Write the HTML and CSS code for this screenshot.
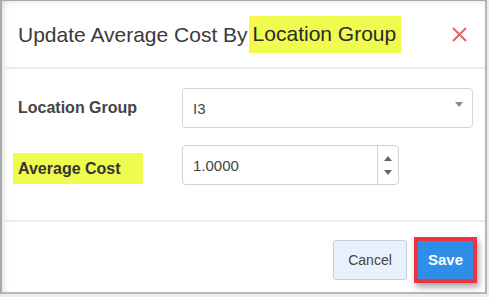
FILE: index.html
```html
<!DOCTYPE html>
<html lang="en">
<head>
    <meta charset="UTF-8">
    <title>Update Average Cost</title>
    <link rel="stylesheet" href="styles.css">
</head>
<body>
    <div class="modal">
        <div class="modal-header">
            <h2 class="modal-title">Update Average Cost By <span class="mark">Location Group</span></h2>
            <svg class="close" width="15" height="15" viewBox="0 0 15 15">
                <path d="M1 1 L14 14 M14 1 L1 14" stroke="#e06262" stroke-width="1.8" fill="none"/>
            </svg>
        </div>

        <div class="modal-body">
            <div class="form-row">
                <label class="label">Location Group</label>
                <div class="select">
                    <span>I3</span>
                    <span class="caret"></span>
                </div>
            </div>
            <div class="form-row">
                <label class="label"><span class="mark mark-label">Average Cost</span></label>
                <div class="number">
                    <span class="number-value">1.0000</span>
                    <div class="spinner">
                        <span class="up"></span>
                        <span class="down"></span>
                    </div>
                </div>
            </div>
        </div>

        <div class="modal-footer">
            <button class="btn btn-cancel">Cancel</button>
            <div class="save-wrap">
                <button class="btn btn-save">Save</button>
            </div>
        </div>
    </div>
</body>
</html>
```

FILE: styles.css
```css
* {
    margin: 0;
    padding: 0;
    box-sizing: border-box;
}

body {
    font-family: 'Liberation Sans', Arial, sans-serif;
    background: #ececec;
    width: 489px;
    height: 297px;
    overflow: hidden;
}

.modal {
    width: 487px;
    height: 294px;
    background: #fff;
    border: 1px solid #a9a9a9;
    border-left: 2px solid #a9a9a9;
    border-bottom: 2px solid #b5b5b5;
    border-right: 2px solid #b5b5b5;
    box-shadow: inset 6px 0 6px -4px rgba(0, 0, 0, 0.12), inset 0 6px 6px -4px rgba(0, 0, 0, 0.08);
    display: flex;
    flex-direction: column;
}

.modal-header {
    height: 68px;
    display: flex;
    align-items: center;
    justify-content: space-between;
    padding: 1px 18px 0 16px;
    border-bottom: 2px solid #ececec;
}

.modal-title {
    font-weight: normal;
    font-size: 21px;
    color: #3a3a3a;
    display: flex;
    align-items: center;
}

.mark {
    background: #f0fa4f;
    color: #2a2a2a;
}

.modal-title .mark {
    padding: 6px 5px 7px 4px;
    margin-left: 1px;
}

.close {
    display: block;
}

.modal-body {
    height: 153px;
    padding: 19px 12px 0 11px;
    border-bottom: 2px solid #ececec;
}

.form-row {
    display: flex;
    align-items: center;
    margin-bottom: 17px;
}

.label {
    width: 169px;
    font-size: 16px;
    font-weight: bold;
    color: #444;
    padding-left: 5px;
}

.mark-label {
    display: inline-block;
    margin-left: -5px;
    margin-top: 7px;
    padding: 7px 22px 6px 5px;
    color: #333;
}

.select {
    flex: 1;
    height: 40px;
    border: 1px solid #d6d6d6;
    border-radius: 4px;
    display: flex;
    align-items: center;
    justify-content: space-between;
    padding: 0 9px 0 10px;
    font-size: 15px;
    color: #444;
}

.caret {
    width: 0;
    height: 0;
    border-left: 4px solid transparent;
    border-right: 4px solid transparent;
    border-top: 5px solid #888;
    margin-bottom: 8px;
}

.number {
    width: 217px;
    height: 40px;
    border: 1px solid #d0d0d0;
    border-radius: 4px;
    display: flex;
    font-size: 15px;
    color: #444;
}

.number-value {
    flex: 1;
    display: flex;
    align-items: center;
    padding-left: 10px;
    border-right: 1px solid #d0d0d0;
}

.spinner {
    width: 20px;
    display: flex;
    flex-direction: column;
    align-items: center;
    justify-content: center;
    gap: 9px;
}

.up, .down {
    width: 0;
    height: 0;
    border-left: 4px solid transparent;
    border-right: 4px solid transparent;
}

.up {
    border-bottom: 5px solid #666;
}

.down {
    border-top: 5px solid #666;
}

.modal-footer {
    flex: 1;
    display: flex;
    align-items: center;
    justify-content: flex-end;
    padding: 5px 8px 0 0;
    gap: 7px;
}

.btn {
    font-family: 'Liberation Sans', Arial, sans-serif;
    font-size: 14px;
    border-radius: 3px;
    cursor: pointer;
}

.btn-cancel {
    width: 74px;
    height: 40px;
    background: #e9f2fc;
    border: 1px solid #c8ced6;
    color: #444;
}

.save-wrap {
    border: 4px solid #ee3340;
    box-shadow: 2px 4px 6px rgba(0, 0, 0, 0.35);
}

.btn-save {
    display: block;
    width: 55px;
    height: 38px;
    background: #2f8ee8;
    border: none;
    border-radius: 0;
    color: #fff;
    font-weight: bold;
    font-size: 15px;
}
```
